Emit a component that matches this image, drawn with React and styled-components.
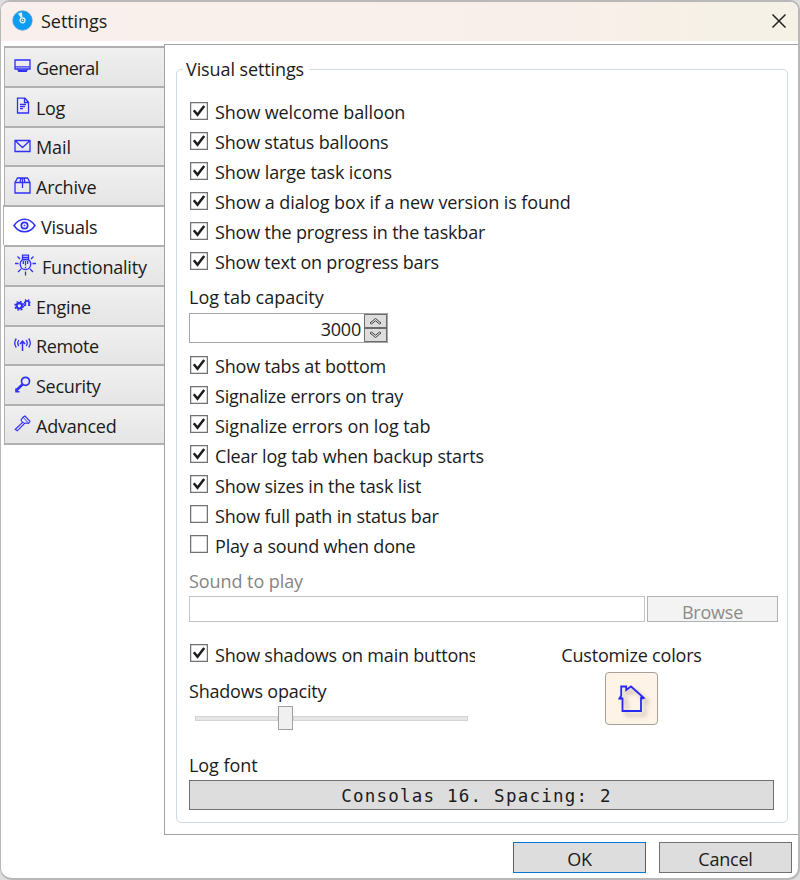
import React, { useState } from "react";
import styled, { createGlobalStyle } from "styled-components";

const GlobalStyle = createGlobalStyle`
  * {
    box-sizing: border-box;
  }
  body {
    margin: 0;
    background-color: #dedede;
    font-family: "Open Sans", "Noto Sans", sans-serif;
    font-size: 18px;
    color: #1b1b1b;
  }
  button, input {
    font: inherit;
    color: inherit;
  }
`;

const Window = styled.div`
  width: 800px;
  height: 880px;
  display: flex;
  flex-direction: column;
  background-color: #fff;
  border: 2px solid #b8b8b8;
  border-left-width: 1px;
  border-radius: 10px 10px 12px 12px;
  overflow: hidden;
`;

const TitleBar = styled.header`
  height: 39px;
  flex: none;
  display: flex;
  align-items: center;
  padding: 0 11px 2px 11px;
  background: linear-gradient(90deg, #f9f0ed 0%, #f9efea 70%, #f6f1e6 90%);
`;

const Title = styled.h1`
  flex: 1;
  margin: 1px 0 0 8px;
  font-size: 18px;
  font-weight: 400;
  letter-spacing: ${({ $track }) => $track}px;
`;

const CloseButton = styled.button`
  display: flex;
  padding: 0;
  border: 0;
  background: none;
`;

const Body = styled.div`
  display: flex;
  height: 794px;
  flex: none;
  padding: 3px 0 0 3px;
`;

const TabList = styled.nav`
  width: 160px;
  display: flex;
  flex-direction: column;
  padding-top: 2px;
`;

const Tab = styled.button`
  height: 39.8px;
  display: flex;
  align-items: center;
  gap: 5px;
  padding: 2px 0 0 9px;
  margin-left: ${({ $active }) => ($active ? -1 : 0)}px;
  border: 0 solid #b0b0b0;
  border-width: 2px 0 0 1px;
  background: ${({ $active }) =>
    $active ? "#fff" : "linear-gradient(#f0f0f0, #e5e5e5)"};
  text-align: left;
  letter-spacing: ${({ $track }) => $track}px;
  &:last-child {
    height: 41px;
    border-bottom-width: 2px;
  }
  svg {
    flex: none;
    position: relative;
    top: -2px;
  }
`;

const Panel = styled.main`
  flex: 1;
  padding: 13px 10px 9px 11px;
  border: 1px solid #a2a2a2;
  border-right: 0;
`;

const Group = styled.fieldset`
  height: 765px;
  margin: 0;
  min-width: 0;
  padding: 16px 8px 0 12px;
  border: 1px solid #cfdae3;
  border-radius: 5px;
`;

const Legend = styled.legend`
  margin-left: -6px;
  padding: 0 5px 0 3px;
  height: 22px;
  line-height: 22px;
  letter-spacing: ${({ $track }) => $track}px;
`;

const CheckRow = styled.label`
  height: 29.95px;
  display: flex;
  align-items: center;
  gap: 7px;
  white-space: nowrap;
  overflow: hidden;
  letter-spacing: ${({ $track }) => $track}px;
  span {
    padding-top: 3px;
  }
`;

const CheckBox = styled.svg`
  width: 18px;
  height: 18px;
  margin-left: 1px;
  flex: none;
`;

const FieldLabel = styled.div`
  height: 24px;
  line-height: 24px;
  margin-top: ${({ $top }) => $top || 0}px;
  color: ${({ $muted }) => ($muted ? "#858585" : "inherit")};
  letter-spacing: ${({ $track }) => $track}px;
  white-space: nowrap;
`;

const Spinner = styled.div`
  width: 199px;
  height: 30px;
  display: flex;
  align-items: center;
  margin: 4px 0 7px;
  border: 1px solid #a6a6a6;
`;

const SpinnerValue = styled.input`
  flex: 1;
  min-width: 0;
  height: 27px;
  padding: 2px 3px 0 0;
  border: 0;
  outline: 0;
  background: none;
  text-align: right;
  letter-spacing: -0.2px;
`;

const SpinnerButtons = styled.div`
  display: flex;
  flex-direction: column;
`;

const SpinnerButton = styled.button`
  width: 23px;
  height: 14px;
  display: flex;
  align-items: center;
  justify-content: center;
  padding: 0;
  border: 1px solid #6c6c6c;
  background-color: #ddd;
`;

const SoundRow = styled.div`
  display: flex;
  gap: 2px;
  margin-top: 3px;
`;

const SoundPath = styled.input`
  width: 456px;
  height: 26px;
  border: 1px solid #c4c4c4;
  background-color: #fff;
`;

const Button = styled.button`
  width: ${({ $width }) => $width}px;
  height: ${({ $height }) => $height}px;
  padding: 3px 0 0;
  line-height: 24px;
  border: 1px solid ${({ $primary }) => ($primary ? "#0078d7" : "#707070")};
  background-color: #ddd;
  letter-spacing: ${({ $track }) => $track}px;
  &:disabled {
    border-color: #adb2b5;
    background-color: #f3f3f3;
    color: #8b8b8b;
  }
`;

const ShadowArea = styled.div`
  display: grid;
  grid-template-columns: 286px 1fr;
  height: 131px;
  padding-top: 16px;
`;

const Slider = styled.div`
  height: 24px;
  width: 273px;
  display: flex;
  align-items: center;
  margin: 3px 0 0 6px;
`;

const Track = styled.div`
  height: 5px;
  flex: ${({ $grow }) => $grow};
  border: 1px solid #d4d4d4;
  background-color: #e6e6e6;
`;

const Thumb = styled.div`
  width: 15px;
  height: 24px;
  border: 1px solid #a0a0a0;
  background-color: #f0f0f0;
`;

const Customize = styled.div`
  display: flex;
  flex-direction: column;
  align-items: center;
  padding-top: 5px;
  margin-left: 9px;
`;

const ColorButton = styled.button`
  width: 53px;
  height: 53px;
  flex: none;
  margin-top: 5px;
  padding: 0;
  display: flex;
  align-items: center;
  justify-content: center;
  border: 1px solid #a5a09a;
  border-radius: 4px;
  background-color: #fdf3e6;
  svg {
    filter: drop-shadow(4px 4px 2px rgba(90, 70, 60, 0.35));
  }
`;

const FontButton = styled.button`
  width: 585px;
  height: 30px;
  margin-top: 3px;
  padding: 1px 10px 0 0;
  border: 1px solid #707070;
  background-color: #ddd;
  font-family: "DejaVu Sans Mono", "Liberation Mono", monospace;
  font-size: 17.5px;
  letter-spacing: 1.22px;
`;

const Footer = styled.footer`
  display: flex;
  justify-content: flex-end;
  gap: 13px;
  padding: 7px 6px 0 0;
`;

const Glyph = ({ w = 17, h = 17, children }) => (
  <svg
    width={w}
    height={h}
    viewBox={`0 0 ${w} ${h}`}
    fill='none'
    stroke='#2f2ffa'
    strokeWidth='1.3'
  >
    {children}
  </svg>
);

const icons = {
  general: (
    <Glyph>
      <path d='M1 3h15v9H1zM1 9.800h15' />
      <path d='M3.500 12l1.200 2.300h7.600l1.200-2.300' />
      <path d='M5 13.300h7' />
    </Glyph>
  ),
  log: (
    <Glyph>
      <path d='M3.500 1.200H11l3.500 4V16h-11zM10.500 1.200v4.300h4' />
      <path d='M6 7.500h6M6 9.600h5M6 11.700h3' />
    </Glyph>
  ),
  mail: (
    <Glyph>
      <path d='M1 3.500h15v11H1zM1.500 4l7 6.500 7-6.500' />
    </Glyph>
  ),
  archive: (
    <Glyph>
      <path d='M1 5.500h15V16H1zM1 5.500L3.500 1h10L16 5.500M8.500 1v10M6.300 5.500v-2L7 1M10.700 5.500v-2L10 1' />
    </Glyph>
  ),
  visuals: (
    <Glyph w={23} h={17}>
      <path
        d='M1 8.500C4 4 8 2.200 11.500 2.200S19 4 22 8.500C19 13 15 14.800 11.500 14.800S4 13 1 8.500z'
        strokeWidth='1.500'
      />
      <circle cx='11.500' cy='8.500' r='3.200' strokeWidth='1.700' />
      <circle cx='11.500' cy='8.500' r='0.500' strokeWidth='1' />
    </Glyph>
  ),
  functionality: (
    <Glyph w={23} h={22}>
      <path d='M8.500 5.500V1.200h6v4.300zM8.500 3.300h6' />
      <path d='M8.800 5.500C6.500 7 6 9 6.300 11c.4 2.400 2.200 4.500 5.200 4.500s4.800-2.100 5.200-4.500c.3-2-.2-4-2.500-5.500z' />
      <path d='M11.500 7v4.500M11.500 12.800v1.200M9.300 7v3M13.700 7v3' />
      <path d='M11.500 17.500v4M1 9.500h3.500M18.500 9.500H22M3.500 2.500l2.500 2.500M19.500 2.500L17 5M4 18l3-3M19 18l-3-3' />
    </Glyph>
  ),
  engine: (
    <Glyph>
      <circle cx='5.300' cy='9.800' r='2.700' strokeWidth='2.200' />
      <circle
        cx='5.300'
        cy='9.800'
        r='4.300'
        strokeDasharray='1.800 1.577'
        strokeWidth='1.500'
      />
      <path
        d='M11.300 9.500V6.500c0-2.300 3.700-2.300 3.700 0v3'
        strokeWidth='1.700'
      />
      <path d='M10 6.500h1.500M15 6.500h1.500M11 3.500l1 1M15.300 3.500l-1 1M10 9.300h2M14.300 9.300h2' />
    </Glyph>
  ),
  remote: (
    <Glyph>
      <path d='M8.500 5v10M6 8l2.500-2.800L11 8' strokeWidth='1.500' />
      <path d='M4.800 4.200C3.500 6 3.500 8.200 4.800 10M12.200 4.200c1.300 1.800 1.300 4 0 5.800M2.300 2.500C.3 5.300.3 8.700 2.300 11.500M14.700 2.500c2 2.800 2 6.200 0 9' />
    </Glyph>
  ),
  security: (
    <Glyph>
      <circle cx='11.500' cy='5.300' r='4' strokeWidth='1.700' />
      <path d='M8.500 8.300L2.300 14.500' strokeWidth='2.600' />
      <path d='M2 12.500v3.300h3.500' strokeWidth='1.600' />
    </Glyph>
  ),
  advanced: (
    <Glyph>
      <path
        d='M1.200 14.500L8.500 7.300 7 5l2-2.800L11 1l5 5.300-1.500 2.200-2.500-.5-1.300.3-7.400 7.500z'
        strokeWidth='1.100'
      />
      <path d='M8.500 7.300l2.200 1M9 2.200l5.500 6' strokeWidth='1' />
    </Glyph>
  ),
};

const tabs = [
  { id: "general", name: "General", track: -0.5 },
  { id: "log", name: "Log", track: -0.3 },
  { id: "mail", name: "Mail", track: -0.1 },
  { id: "archive", name: "Archive", track: -0.25 },
  { id: "visuals", name: "Visuals", track: -0.25 },
  { id: "functionality", name: "Functionality", track: -0.2 },
  { id: "engine", name: "Engine", track: -0.3 },
  { id: "remote", name: "Remote", track: -0.42 },
  { id: "security", name: "Security", track: -0.3 },
  { id: "advanced", name: "Advanced", track: -0.2 },
];

const displayOptions = [
  { text: "Show welcome balloon", track: -0.12, on: true },
  { text: "Show status balloons", track: -0.2, on: true },
  { text: "Show large task icons", track: -0.13, on: true },
  { text: "Show a dialog box if a new version is found", track: -0.1, on: true },
  { text: "Show the progress in the taskbar", track: -0.19, on: true },
  { text: "Show text on progress bars", track: -0.2, on: true },
];

const logOptions = [
  { text: "Show tabs at bottom", track: -0.17, on: true },
  { text: "Signalize errors on tray", track: -0.21, on: true },
  { text: "Signalize errors on log tab", track: -0.08, on: true },
  { text: "Clear log tab when backup starts", track: -0.16, on: true },
  { text: "Show sizes in the task list", track: -0.18, on: true },
  { text: "Show full path in status bar", track: -0.18, on: false },
  { text: "Play a sound when done", track: -0.19, on: false },
];

const shadowOption = {
  text: "Show shadows on main buttons",
  track: -0.2,
  on: true,
};

function Option({ option }) {
  const [checked, setChecked] = useState(option.on);
  return (
    <CheckRow $track={option.track} onClick={() => setChecked(!checked)}>
      <CheckBox viewBox='0 0 18 18'>
        <rect
          x='0.600'
          y='0.600'
          width='16.800'
          height='16.800'
          fill='#fff'
          stroke='#727272'
          strokeWidth='1.300'
        />
        {checked && (
          <path
            d='M3.800 8.300l3.700 4.500L14.200 4'
            fill='none'
            stroke='#1c1c1c'
            strokeWidth='2.500'
          />
        )}
      </CheckBox>
      <span>{option.text}</span>
    </CheckRow>
  );
}

export default function App() {
  const [activeTab, setActiveTab] = useState("visuals");

  return (
    <>
      <GlobalStyle />
      <Window>
        <TitleBar>
          <svg width='21' height='21' viewBox='0 0 21 21'>
            <circle cx='10.500' cy='10.500' r='9.700' fill='#0d9df5' stroke='#4c9bd0' strokeWidth='0.800' />
            <path d='M6 3.500l3.800-1.200.8 5-1.800.8z' fill='#d9f0fd' />
            <circle cx='10.500' cy='10.300' r='2.500' fill='#4898c8' stroke='#e8f5fd' strokeWidth='1.200' />
            <circle cx='10.500' cy='10.300' r='0.800' fill='#fff' />
          </svg>
          <Title $track={-0.05}>Settings</Title>
          <CloseButton aria-label='Close'>
            <svg width='16' height='16' viewBox='0 0 16 16'>
              <path
                d='M1.500 1.500l13 13M14.500 1.500l-13 13'
                stroke='#222'
                strokeWidth='1.500'
              />
            </svg>
          </CloseButton>
        </TitleBar>
        <Body>
          <TabList>
            {tabs.map((tab) => (
              <Tab
                key={tab.id}
                $active={tab.id === activeTab}
                $track={tab.track}
                onClick={() => setActiveTab(tab.id)}
              >
                {icons[tab.id]}
                {tab.name}
              </Tab>
            ))}
          </TabList>
          <Panel>
            <Group>
              <Legend $track={-0.1}>Visual settings</Legend>
              {displayOptions.map((option) => (
                <Option key={option.text} option={option} />
              ))}
              <FieldLabel $top={9} $track={-0.02}>
                Log tab capacity
              </FieldLabel>
              <Spinner>
                <SpinnerValue defaultValue='3000' />
                <SpinnerButtons>
                  <SpinnerButton aria-label='Increase'>
                    <svg width='13' height='8' viewBox='0 0 13 8' fill='none' stroke='#444'>
                      <path d='M1 6l5.500-4.500L12 6l-1.500 1-4-3.200L2.500 7z' />
                    </svg>
                  </SpinnerButton>
                  <SpinnerButton aria-label='Decrease'>
                    <svg width='13' height='8' viewBox='0 0 13 8' fill='none' stroke='#444'>
                      <path d='M1 2l5.500 4.500L12 2l-1.500-1-4 3.200L2.500 1z' />
                    </svg>
                  </SpinnerButton>
                </SpinnerButtons>
              </Spinner>
              {logOptions.map((option) => (
                <Option key={option.text} option={option} />
              ))}
              <FieldLabel $top={10} $muted $track={-0.07}>
                Sound to play
              </FieldLabel>
              <SoundRow>
                <SoundPath disabled />
                <Button $width={131} $height={26} $track={-0.2} disabled>
                  Browse
                </Button>
              </SoundRow>
              <ShadowArea>
                <div>
                  <Option option={shadowOption} />
                  <FieldLabel $top={11} $track={-0.2}>
                    Shadows opacity
                  </FieldLabel>
                  <Slider>
                    <Track $grow={82} />
                    <Thumb />
                    <Track $grow={176} />
                  </Slider>
                </div>
                <Customize>
                  <FieldLabel $track={-0.18}>Customize colors</FieldLabel>
                  <ColorButton aria-label='Customize colors'>
                    <svg width='30' height='30' viewBox='0 0 30 30'>
                      <path
                        d='M5.500 27V14.500H2.500l1.700-3V2.500h5V6L14 2.500l12.500 11.200h-2.500V27z'
                        fill='none'
                        stroke='#2828f5'
                        strokeWidth='1.800'
                      />
                      <path
                        d='M1.500 14.300l3-2.800v3.800H2.500zM27.500 14l-3.200-2.500v3.800h2.200z'
                        fill='#2828f5'
                      />
                    </svg>
                  </ColorButton>
                </Customize>
              </ShadowArea>
              <FieldLabel $track={-0.05}>Log font</FieldLabel>
              <FontButton>Consolas 16. Spacing: 2</FontButton>
            </Group>
          </Panel>
        </Body>
        <Footer>
          <Button $width={133} $height={31} $primary $track={-0.3}>
            OK
          </Button>
          <Button $width={133} $height={31} $track={-0.2}>
            Cancel
          </Button>
        </Footer>
      </Window>
    </>
  );
}
